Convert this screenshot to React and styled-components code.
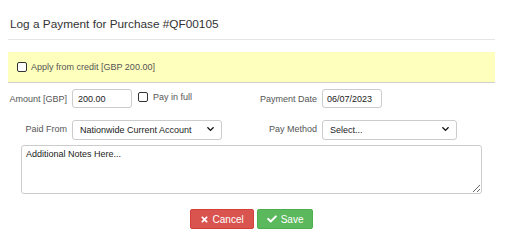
import React from "react";
import styled, { createGlobalStyle } from "styled-components";
import { FaTimes, FaCheck, FaChevronDown } from "react-icons/fa";

const Global = createGlobalStyle`
  html, body { margin: 0; padding: 0; background: #fff; }
  body { font-family: "Liberation Sans", Arial, sans-serif; color: #333; }
  * { box-sizing: border-box; }
`;

const Modal = styled.div`
  margin-left: 8px;
  width: 487px;
`;

const Header = styled.div`
  padding: 17px 0 8px 2px;
  border-bottom: 1px solid #e5e5e5;
`;

const Title = styled.h4`
  margin: 0;
  font-size: 11.8px;
  line-height: 14px;
  font-weight: normal;
  color: #333;
`;

const Body = styled.div`
  padding-top: 12px;
  display: flex;
  flex-direction: column;
`;

const CreditBox = styled.div`
  height: 31px;
  background: #ffffbd;
  border-bottom: 1px solid #cfcfcf;
  display: flex;
  align-items: center;
  padding-left: 9px;
  gap: 4px;
  font-size: 9px;
  color: #555;
`;

const Check = styled.input.attrs({ type: "checkbox" })`
  appearance: none;
  margin: 0;
  width: 10px;
  height: 10px;
  border: 1px solid #333;
  border-radius: 2px;
  background: #fff;
  flex: none;
`;

const Row = styled.div`
  display: flex;
  align-items: center;
  margin-top: ${(p) => p.$mt}px;
  height: ${(p) => p.$h}px;
`;

const Group = styled.div`
  flex: none;
  width: 250px;
  display: flex;
  align-items: center;
  height: 100%;
`;

const Label = styled.label`
  width: 59px;
  margin-right: 5px;
  text-align: right;
  font-size: 9px;
  color: #555;
  white-space: nowrap;
`;

const TextInput = styled.input`
  width: ${(p) => p.$w}px;
  height: 19px;
  margin: 0;
  padding: 0 ${(p) => p.$pad}px;
  border: 1px solid #cccccc;
  border-radius: 3px;
  font-family: "Liberation Sans", Arial, sans-serif;
  font-size: 9px;
  color: #222;
  outline: none;
`;

const Inline = styled.label`
  display: flex;
  align-items: center;
  gap: 5px;
  margin-left: 6px;
  margin-top: -3px;
  font-size: 9px;
  color: #555;
`;

const SelectWrap = styled.div`
  position: relative;
  width: ${(p) => p.$w}px;
  height: 20px;
`;

const Select = styled.select`
  appearance: none;
  width: 100%;
  height: 100%;
  margin: 0;
  padding: 0 20px 0 7px;
  border: 1px solid #cccccc;
  border-radius: 3px;
  background: #fff;
  font-family: "Liberation Sans", Arial, sans-serif;
  font-size: 9px;
  color: #222;
  outline: none;
`;

const Chevron = styled(FaChevronDown)`
  position: absolute;
  right: 8px;
  top: 6px;
  width: 7px;
  height: 8px;
  color: #111;
  pointer-events: none;
`;

const Notes = styled.textarea`
  margin: 6px 0 0 13px;
  width: 461px;
  height: 49px;
  padding: 3px 4px;
  border: 1px solid #cccccc;
  border-radius: 3px;
  font-family: "Liberation Sans", Arial, sans-serif;
  font-size: 9px;
  color: #222;
  outline: none;
  &::placeholder { color: #222; }
`;

const Actions = styled.div`
  margin-top: 15px;
  display: flex;
  justify-content: center;
  gap: 3px;
`;

const Button = styled.button`
  height: 20px;
  padding: 0 9px;
  display: flex;
  align-items: center;
  gap: 4px;
  border: 1px solid ${(p) => (p.$variant === "danger" ? "#d43f3a" : "#4cae4c")};
  background: ${(p) => (p.$variant === "danger" ? "#d9534f" : "#5cb85c")};
  color: #fff;
  border-radius: 2px;
  font-family: "Liberation Sans", Arial, sans-serif;
  font-size: 10px;
  cursor: pointer;
  svg { flex: none; }
`;

export default function App() {
  return (
    <>
      <Global />
      <Modal>
        <Header>
          <Title>Log a Payment for Purchase #QF00105</Title>
        </Header>
        <Body>
          <CreditBox>
            <Check />
            <span>Apply from credit [GBP 200.00]</span>
          </CreditBox>
          <Row $mt={6} $h={19}>
            <Group>
              <Label>Amount [GBP]</Label>
              <TextInput $w={60} $pad={5} defaultValue="200.00" />
              <Inline>
                <Check />
                Pay in full
              </Inline>
            </Group>
            <Group>
              <Label>Payment Date</Label>
              <TextInput $w={60} $pad={4} defaultValue="06/07/2023" />
            </Group>
          </Row>
          <Row $mt={11} $h={20}>
            <Group>
              <Label>Paid From</Label>
              <SelectWrap $w={150}>
                <Select defaultValue="nw">
                  <option value="nw">Nationwide Current Account</option>
                </Select>
                <Chevron />
              </SelectWrap>
            </Group>
            <Group>
              <Label>Pay Method</Label>
              <SelectWrap $w={135}>
                <Select defaultValue="">
                  <option value="">Select...</option>
                </Select>
                <Chevron />
              </SelectWrap>
            </Group>
          </Row>
          <Notes placeholder="Additional Notes Here..." />
          <Actions>
            <Button $variant="danger">
              <FaTimes size={9} />
              Cancel
            </Button>
            <Button $variant="success">
              <FaCheck size={10} />
              Save
            </Button>
          </Actions>
        </Body>
      </Modal>
    </>
  );
}
